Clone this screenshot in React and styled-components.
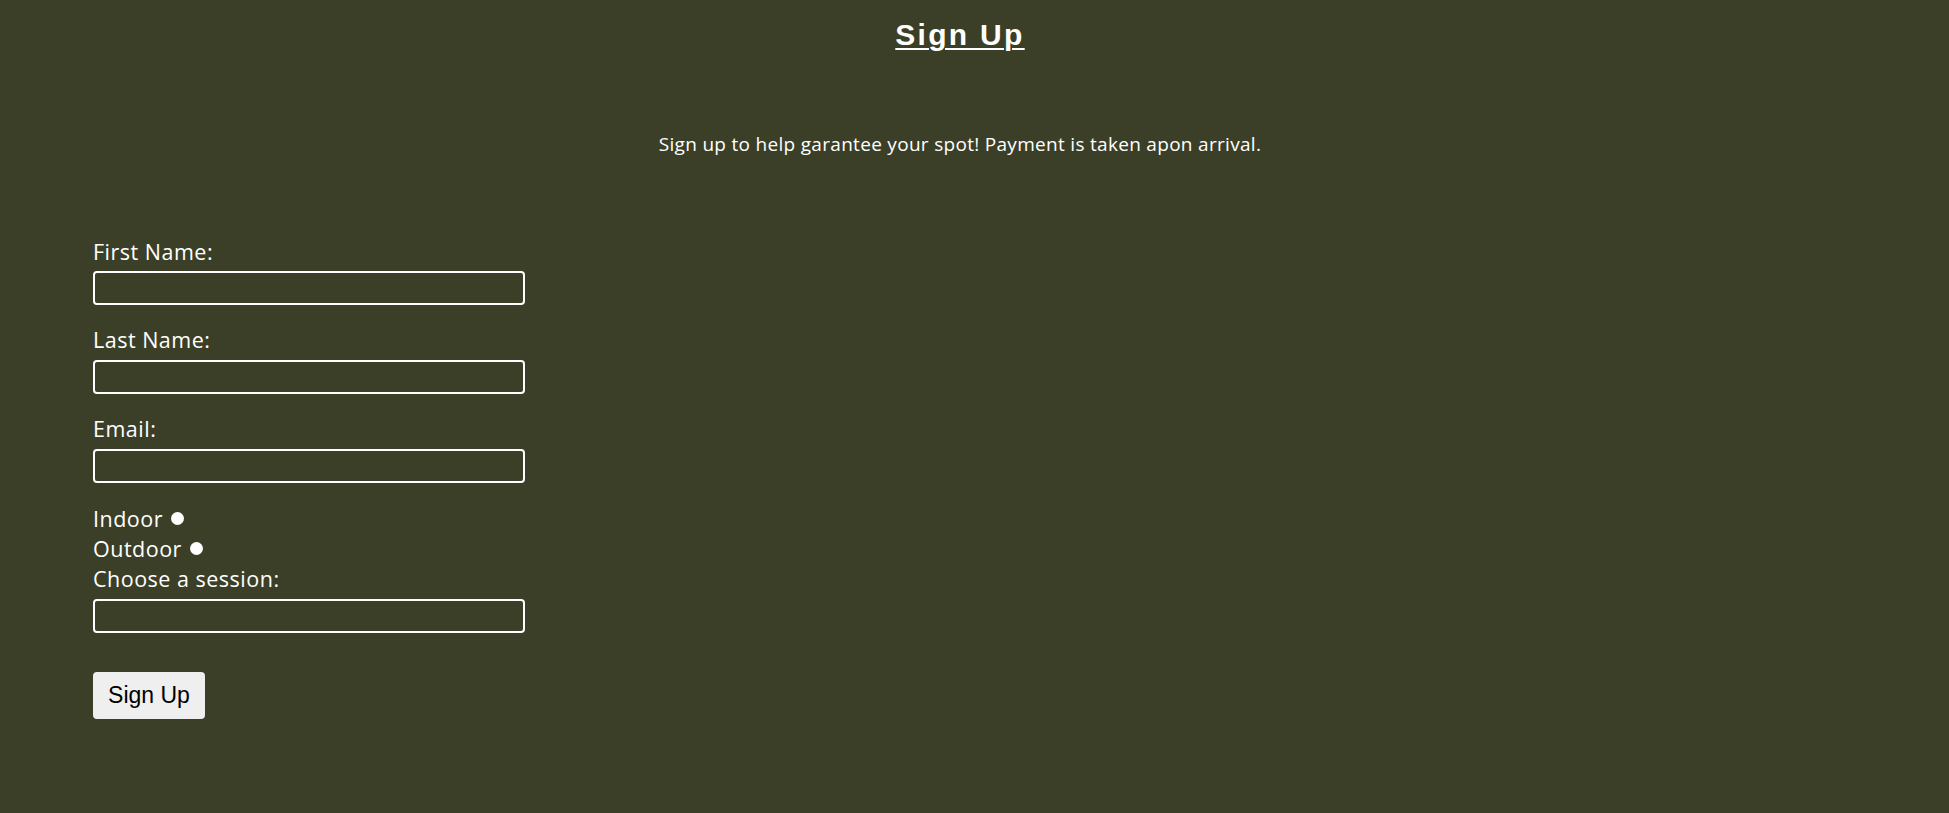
import React from 'react';
import styled, { createGlobalStyle } from 'styled-components';

const GlobalStyle = createGlobalStyle`
  html, body {
    margin: 0;
    padding: 0;
    background: #3c3f28;
  }
  body {
    font-family: "Open Sans", "Liberation Sans", sans-serif;
    color: #ffffff;
    min-height: 813px;
  }
`;

const Page = styled.div`
  width: 1904px;
  padding: 0 8px;
  min-height: 813px;
`;

const Title = styled.h1`
  margin: 18px 0 0;
  text-align: center;
  font-family: "Liberation Sans", Arial, sans-serif;
  font-size: 30px;
  font-weight: 700;
  letter-spacing: 2.3px;
  text-decoration: underline;
  text-decoration-thickness: 2px;
  text-underline-offset: 3px;
`;

const Intro = styled.p`
  margin: 79px 0 0;
  text-align: center;
  font-size: 19px;
  letter-spacing: 0.3px;
`;

const Form = styled.form`
  margin: 79.5px 0 0 85px;
  display: flex;
  flex-direction: column;
  align-items: flex-start;
`;

const Field = styled.div`
  display: flex;
  flex-direction: column;
  align-items: flex-start;
  margin-bottom: ${(p) => p.$gap || 0}px;
`;

const Label = styled.label`
  font-size: 21.5px;
  line-height: 29.3px;
  letter-spacing: 0.5px;
  margin-bottom: ${(p) => p.$gap || 0}px;
`;

const TextInput = styled.input`
  box-sizing: border-box;
  width: 432px;
  height: 34px;
  margin: 0;
  background: transparent;
  border: 2px solid #ffffff;
  border-radius: 4px;
  color: #ffffff;
  font-family: "Open Sans", sans-serif;
  font-size: 16px;
  padding: 0 6px;
  outline: none;
`;

const RadioRow = styled.div`
  font-size: 21.5px;
  line-height: 30px;
  letter-spacing: 0.5px;
`;

const Radio = styled.input`
  appearance: none;
  width: 13px;
  height: 13px;
  margin: 0 3px 2px 2px;
  border-radius: 50%;
  background: #ffffff;
  vertical-align: baseline;
`;

const Submit = styled.button`
  margin-top: 39px;
  box-sizing: border-box;
  width: 112px;
  height: 47px;
  padding: 0;
  background: #efefef;
  color: #000000;
  border: none;
  border-radius: 4px;
  font-family: "Liberation Sans", Arial, sans-serif;
  font-size: 23px;
`;

export default function App() {
  return (
    <Page>
      <GlobalStyle />
      <Title>Sign Up</Title>
      <Intro>Sign up to help garantee your spot! Payment is taken apon arrival.</Intro>
      <Form onSubmit={(e) => e.preventDefault()}>
        <Field $gap={20.2}>
          <Label htmlFor="fname" $gap={5.5}>First Name:</Label>
          <TextInput id="fname" type="text" />
        </Field>
        <Field $gap={20.2}>
          <Label htmlFor="lname" $gap={5.5}>Last Name:</Label>
          <TextInput id="lname" type="text" />
        </Field>
        <Field $gap={20.5}>
          <Label htmlFor="email" $gap={5.5}>Email:</Label>
          <TextInput id="email" type="email" />
        </Field>
        <RadioRow>
          <label htmlFor="indoor">Indoor</label> <Radio id="indoor" type="radio" name="where" />
        </RadioRow>
        <RadioRow>
          <label htmlFor="outdoor">Outdoor</label> <Radio id="outdoor" type="radio" name="where" />
        </RadioRow>
        <Field>
          <Label htmlFor="session" $gap={5.5}>Choose a session:</Label>
          <TextInput id="session" type="text" />
        </Field>
        <Submit type="submit">Sign Up</Submit>
      </Form>
    </Page>
  );
}
